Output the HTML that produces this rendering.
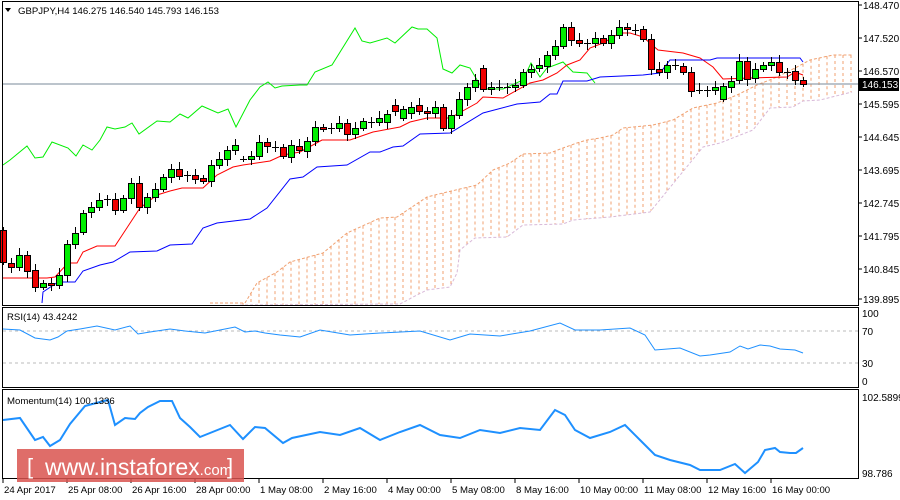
<!DOCTYPE html>
<html><head><meta charset="utf-8"><style>
html,body{margin:0;padding:0;background:#fff;width:900px;height:500px;overflow:hidden}
svg{display:block;font-family:"Liberation Sans",sans-serif}
</style></head><body>
<svg id="s" width="900" height="500" viewBox="0 0 900 500" xmlns="http://www.w3.org/2000/svg">
<rect width="900" height="500" fill="#fff"/>
<g id="cloud"></g>
<line x1="2" y1="84" x2="858" y2="84" stroke="#7a8a99" stroke-width="1"/>
<g id="lines"></g>
<g id="candles"></g>
<g fill="none" stroke="#000" stroke-width="1">
<rect x="2.5" y="1.5" width="856" height="304"/>
<rect x="2.5" y="307.5" width="856" height="80"/>
<rect x="2.5" y="389.5" width="856" height="89"/>
</g>
<line x1="3" y1="331" x2="858" y2="331" stroke="#bbb" stroke-dasharray="3,3"/>
<line x1="3" y1="363" x2="858" y2="363" stroke="#bbb" stroke-dasharray="3,3"/>
<g id="ind"></g>
<g font-size="9.6" fill="#000">
<path d="M5 8 L11 8 L8 12 Z" fill="#000"/>
<text x="18" y="14">GBPJPY,H4  146.275 146.540 145.793 146.153</text>
<text x="7" y="320">RSI(14) 43.4242</text>
<text x="7" y="404">Momentum(14) 100.1336</text>
</g>
<g id="axis" font-size="10" fill="#000"></g>
<rect x="859" y="78" width="40" height="13" fill="#000"/>
<text x="862" y="88" font-size="10" fill="#fff">146.153</text>
<g>
<rect x="17" y="449" width="227" height="33" fill="#d9534f" fill-opacity="0.85"/>
<text x="27" y="474" font-size="22" fill="#fff">[</text>
<text x="45" y="475" font-size="23" fill="#fff">www.instaforex<tspan font-size="15">.com</tspan></text>
<text x="227" y="474" font-size="22" fill="#fff">]</text>
</g>
</svg>
<script>
var NS="http://www.w3.org/2000/svg";
function el(p,t,a){var e=document.createElementNS(NS,t);for(var k in a)e.setAttribute(k,a[k]);p.appendChild(e);return e;}
var C=[[230,262],[263,267],[267,255],[255,271],[270,287],[287,283],[283,285],[285,275],[275,244],[244,233],[232,213],[212,207],[207,200],[199,199],[199,210],[210,198],[198,183],[183,207],[207,197],[197,189],[189,177],[177,169],[169,176],[175,175],[175,179],[178,181],[181,165],[165,159],[159,150],[150,145],[159,159],[159,156],[156,142],[142,146],[147,147],[147,156],[157,145],[146,150],[151,141],[141,127],[127,129],[128,128],[128,123],[123,134],[134,128],[128,121],[122,122],[122,118],[122,114],[105,111],[118,109],[113,107],[105,111],[111,113],[113,107],[107,128],[128,115],[115,99],[99,87],[87,80],[68,89],[89,87],[87,87],[87,87],[87,85],[85,72],[72,69],[68,65],[66,55],[55,46],[46,27],[27,40],[40,43],[43,43],[43,38],[38,43],[43,35],[35,27],[27,29],[30,30],[29,39],[39,69],[69,72],[72,65],[65,65],[66,72],[72,91],[90,90],[90,90],[90,87],[99,86],[87,81],[80,61],[61,79],[78,69],[69,65],[65,62],[62,72],[72,72],[71,80],[80,84]];
function pl(pts,col,w,dash,parent){var d=pts.map(function(p){return p[0]+","+p[1]}).join(" ");var a={points:d,fill:"none",stroke:col,"stroke-width":w};if(dash)a["stroke-dasharray"]=dash;el(parent,"polyline",a);}
function interp(pts,x){if(x<=pts[0][0])return pts[0][1];for(var i=1;i<pts.length;i++){if(x<=pts[i][0]){var a=pts[i-1],b=pts[i];return a[1]+(b[1]-a[1])*(x-a[0])/(b[0]-a[0]);}}return pts[pts.length-1][1];}
var A=[[210,303],[245,303],[257,283],[277,272],[290,262],[323,253],[347,233],[380,218],[397,217],[427,197],[443,193],[477,185],[493,170],[510,163],[523,154],[550,153],[563,148],[577,143],[587,140],[600,138],[613,135],[623,128],[653,125],[673,120],[693,108],[717,103],[737,95],[757,85],[777,77],[797,67],[810,60],[833,55],[852,55]];
var B=[[240,305],[400,304],[417,295],[427,290],[450,287],[457,273],[460,250],[475,238],[507,237],[523,225],[563,224],[573,220],[610,217],[650,212],[703,147],[720,143],[753,130],[770,108],[793,107],[803,101],[820,100],[852,92]];
var cl=document.getElementById('cloud');
for(var x=243;x<=851;x+=8){var ya=interp(A,x),yb=interp(B,x);el(cl,"line",{x1:x,y1:ya,x2:x,y2:yb,stroke:"#f0a070","stroke-width":1,"stroke-dasharray":"3,3"});}
pl(A,"#f0a070",1,"3,2",cl);pl(B,"#d8b8d8",1,"3,2",cl);
var L=document.getElementById('lines');
pl([[3,165],[10,160],[27,146],[35,158],[43,157],[52,142],[68,148],[76,156],[83,145],[92,150],[100,140],[107,127],[115,129],[125,127],[132,123],[139,134],[157,121],[170,122],[180,114],[188,118],[202,106],[218,113],[228,109],[236,127],[250,100],[260,87],[268,82],[275,88],[282,86],[300,85],[307,85],[315,72],[332,65],[355,28],[362,41],[370,43],[387,38],[395,43],[412,27],[418,29],[427,29],[437,38],[443,69],[452,73],[460,65],[470,68],[480,85],[487,89],[503,89],[523,80],[531,63],[540,77],[547,68],[563,62],[573,72],[587,73],[595,83]],"#00ee00",1,null,L);
pl([[3,278],[47,278],[55,277],[68,263],[77,263],[83,252],[97,246],[115,246],[140,208],[157,195],[170,191],[182,188],[203,188],[217,175],[233,167],[243,165],[270,161],[283,155],[300,152],[322,140],[350,140],[373,132],[400,127],[410,122],[427,118],[450,118],[477,103],[483,97],[503,98],[530,83],[543,80],[557,73],[567,65],[580,60],[590,48],[603,43],[620,33],[630,33],[643,37],[658,50],[683,53],[700,58],[713,67],[723,79],[750,78],[787,77],[795,72],[803,75]],"#ff0000",1,null,L);
pl([[42,303],[43,292],[58,282],[75,282],[83,271],[100,265],[113,262],[130,252],[157,251],[170,245],[192,244],[203,228],[217,223],[250,219],[267,208],[290,179],[303,177],[317,167],[347,165],[370,152],[380,152],[393,147],[403,146],[420,134],[450,133],[483,113],[517,104],[540,102],[550,94],[557,94],[563,81],[587,81],[600,77],[643,75],[660,73],[670,60],[710,60],[717,58],[800,58],[803,62]],"#0000ff",1,null,L);
var G=document.getElementById('candles');
for(var i=0;i<C.length;i++){var x=3+8*i,o=C[i][0],c=C[i][1],t=Math.min(o,c),b=Math.max(o,c);var wt=t-3-((i*7)%5),wb=b+3+((i*3)%5);
el(G,"line",{x1:x+0.5,y1:wt,x2:x+0.5,y2:Math.min(wb,304),stroke:"#000","stroke-width":1});
if(b-t<1.5){el(G,"line",{x1:x-3,y1:t+0.5,x2:x+4,y2:t+0.5,stroke:"#000","stroke-width":1});}
else el(G,"rect",{x:x-2.5,y:t+0.5,width:6,height:b-t,fill:(c<o?"#00ee00":"#ee0000"),stroke:"#000","stroke-width":1});}
var I=document.getElementById('ind');
pl([[3,329],[20,330],[35,338],[50,340],[58,337],[67,331],[80,329],[97,326],[115,330],[130,326],[138,334],[150,332],[170,329],[185,331],[205,333],[220,330],[235,327],[245,332],[255,331],[265,333],[280,335],[300,337],[320,330],[350,335],[380,333],[420,331],[450,340],[470,334],[500,336],[530,331],[560,323],[575,330],[600,330],[630,328],[645,335],[655,350],[680,348],[700,356],[710,355],[730,352],[740,346],[748,349],[760,345],[770,346],[780,349],[795,350],[803,353]],"#1e90ff",1,null,I);
pl([[3,420],[20,418],[35,440],[43,437],[50,446],[60,440],[70,424],[85,406],[100,402],[108,400],[115,425],[125,418],[135,419],[140,413],[148,407],[160,401],[172,401],[180,418],[190,427],[200,437],[210,433],[220,429],[230,425],[243,439],[255,427],[265,428],[283,443],[292,438],[320,432],[340,435],[360,428],[380,440],[400,432],[420,425],[440,435],[460,438],[480,430],[500,433],[520,428],[540,430],[555,410],[565,415],[575,430],[590,438],[610,432],[625,425],[640,440],[655,455],[670,460],[690,465],[700,470],[720,470],[735,464],[745,473],[758,462],[765,450],[775,448],[780,452],[790,453],[796,453],[803,448]],"#1e90ff",2,null,I);
var AX=document.getElementById('axis');
var yl=[["148.470",5],["147.520",38],["146.570",71],["145.595",104],["144.645",137],["143.695",170],["142.745",203],["141.795",236],["140.845",269],["139.895",299]];
yl.forEach(function(v){el(AX,"line",{x1:858,y1:v[1],x2:862,y2:v[1],stroke:"#000"});var t=el(AX,"text",{x:863,y:v[1]+4});t.textContent=v[0];});
[["100",313],["70",331],["30",363],["0",381],["102.5899",397],["98.786",473]].forEach(function(v){var t=el(AX,"text",{x:862,y:v[1]+4});t.textContent=v[0];});
var dl=["24 Apr 2017","25 Apr 08:00","26 Apr 16:00","28 Apr 00:00","1 May 08:00","2 May 16:00","4 May 00:00","5 May 08:00","8 May 16:00","10 May 00:00","11 May 08:00","12 May 16:00","16 May 00:00"];
dl.forEach(function(d,k){var x=3+64*k;el(AX,"line",{x1:x,y1:479,x2:x,y2:483,stroke:"#000"});var t=el(AX,"text",{x:x+1,y:493,"font-size":"9.6"});t.textContent=d;});
</script>
</body></html>
